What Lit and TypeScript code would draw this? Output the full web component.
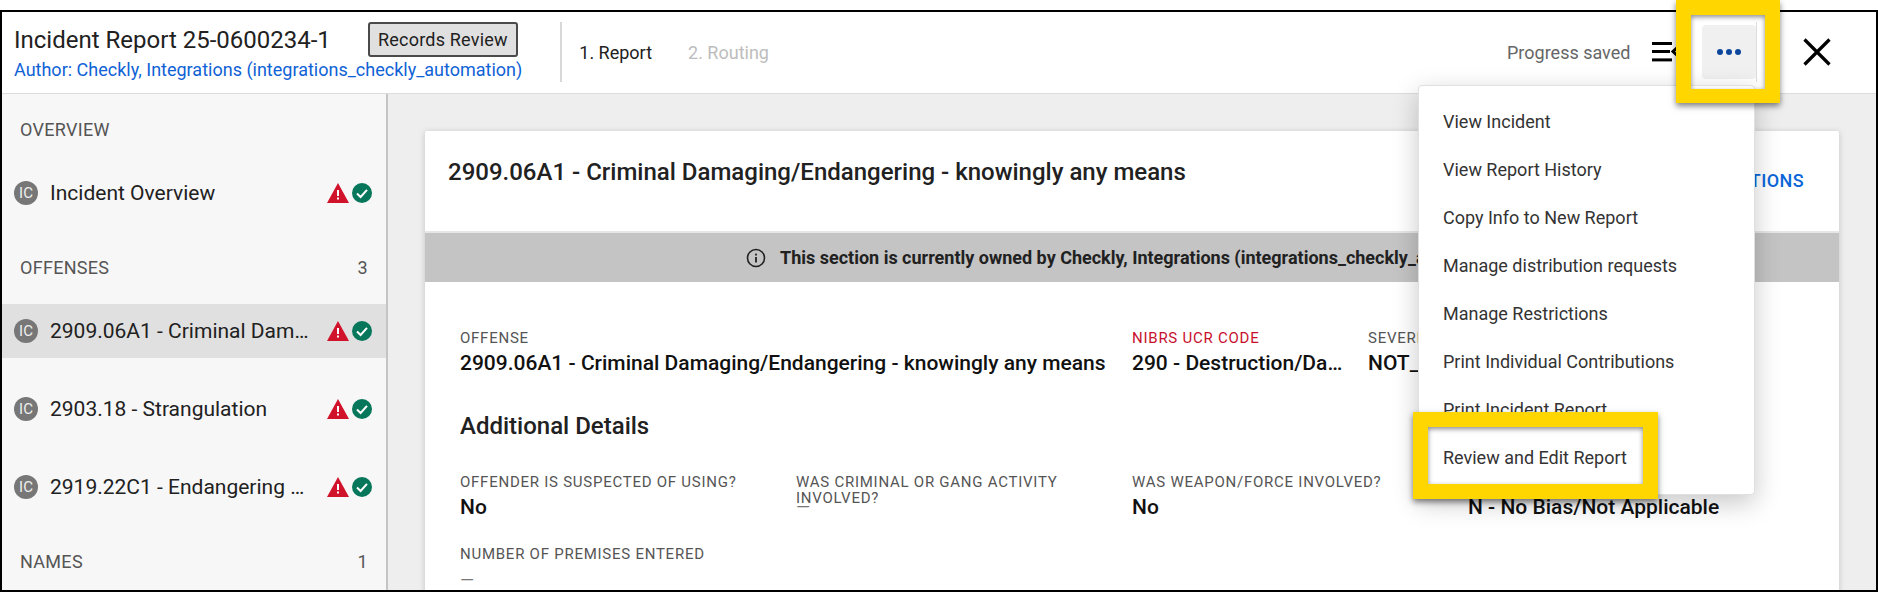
import { LitElement, html, css } from "lit";
import { customElement } from "lit/decorators.js";

const warn = html`<svg class="warn" viewBox="0 0 22 20" width="22" height="20"><path d="M11 0 L22 20 H0 Z" fill="#d0132b"/><rect x="10" y="7" width="2" height="6" fill="#fff"/><rect x="10" y="14.5" width="2" height="2" fill="#fff"/></svg>`;
const ok = html`<svg class="ok" viewBox="0 0 20 20" width="20" height="20"><circle cx="10" cy="10" r="10" fill="#07775b"/><path d="M5 10.5 L8.6 14 L15 6.8" fill="none" stroke="#fff" stroke-width="2"/></svg>`;

@customElement("app-root")
export class AppRoot extends LitElement {
  static styles = css`
    :host { display: block; position: relative; width: 1878px; height: 592px; background: #fff; overflow: hidden; font-family: Roboto, "Liberation Sans", sans-serif; color: #212121; }
    .frame { position: absolute; inset: 10px 0 0 0; border: 2px solid #000; display: flex; flex-direction: column; overflow: hidden; background: #fff; }
    header { flex: none; height: 82px; box-sizing: border-box; border-bottom: 1px solid #ddd; display: flex; align-items: flex-start; padding-left: 12px; }
    .tcol { padding-top: 10px; }
    .trow { display: flex; align-items: center; height: 35px; }
    .title { font-size: 24px; color: #212121; }
    .rr { margin-left: 37px; box-sizing: border-box; width: 150px; height: 35px; background: #e0e0e0; border: 2px solid #4a4a4a; border-radius: 3px; font: 18px Roboto, sans-serif; letter-spacing: .2px; color: #212121; padding: 0; }
    .author { font-size: 18px; line-height: 24px; margin-top: 1px; color: #0f62d6; }
    .divider { margin: 10px 17px 0 38px; width: 2px; height: 60px; background: #d8d8d8; flex: none; }
    .steps { display: flex; gap: 36px; font-size: 18px; height: 80px; align-items: center; color: #212121; }
    .steps .off { color: #bdbdbd; }
    .right { margin-left: auto; display: flex; align-items: center; height: 80px; }
    .saved { font-size: 18px; color: #666; width: 145px; }
    .list { width: 50px; height: 20px; display: block; }
    .more { width: 54px; height: 54px; background: #f0f0f0; border-radius: 4px; display: flex; align-items: center; justify-content: center; gap: 3px; }
    .more i { width: 6px; height: 6px; border-radius: 50%; background: #0c479d; display: block; }
    .vsep { width: 1px; height: 60px; background: #ddd; }
    .x { display: block; margin: 0 45px 0 46px; }
    .body { flex: 1; display: flex; min-height: 0; }
    aside { flex: none; width: 386px; box-sizing: border-box; background: #f7f7f7; border-right: 2px solid #c4c4c4; }
    .sec { display: flex; justify-content: space-between; padding: 0 18px; font-size: 18px; line-height: 22px; color: #555; letter-spacing: .3px; }
    .row { height: 54px; display: flex; align-items: center; padding: 0 14px 0 12px; font-size: 21px; color: #212121; }
    .row.sel { background: #e0e0e0; }
    .ic { flex: none; width: 24px; height: 24px; border-radius: 50%; background: #777; color: #eee; font-size: 15px; display: flex; align-items: center; justify-content: center; margin-right: 12px; }
    .nm { width: 262px; white-space: nowrap; overflow: hidden; text-overflow: ellipsis; }
    .warn { margin: 0 3px 0 15px; flex: none; }
    .ok { flex: none; }
    main { flex: 1; background: #eee; padding: 37px 37px 0; min-width: 0; }
    .card { background: #fff; box-shadow: 0 1px 6px rgba(0,0,0,.18); border-radius: 2px 2px 0 0; height: 600px; }
    .chead { height: 102px; box-sizing: border-box; padding: 25px 23px 0; display: flex; justify-content: space-between; border-bottom: 2px solid #e6e6e6; }
    .chead h2 { margin: 0; font-size: 24px; line-height: 32px; font-weight: 500; color: #212121; }
    .act { font-size: 18px; font-weight: 500; color: #0a66d8; padding: 14px 12px 0 0; letter-spacing: .4px; }
    .banner { height: 49px; background: #c4c4c4; display: flex; align-items: center; padding-left: 321px; font-size: 18px; font-weight: 700; white-space: nowrap; gap: 14px; overflow: hidden; }
    .cbody { padding: 48px 0 0 35px; }
    .f-row { display: flex; }
    .f { box-sizing: border-box; width: 336px; }
    .f.w2 { width: 672px; }
    .f.n { width: 236px; padding-right: 20px; }
    .lb { font-size: 15px; line-height: 16px; color: #555; letter-spacing: .75px; text-transform: uppercase; }
    .lb.red { color: #c8102e; }
    .v { font-size: 21px; line-height: 24px; font-weight: 500; color: #111; margin-top: 5px; white-space: nowrap; overflow: hidden; text-overflow: ellipsis; }
    .f.g .lb { padding-right: 60px; }
    .dash { font-size: 18px; line-height: 24px; color: #777; margin-top: 6px; }
    .f.g .dash { margin-top: -11px; }
    h3 { margin: 35px 0 0; font-size: 24px; line-height: 32px; font-weight: 500; color: #212121; }
    .grid { display: flex; margin-top: 32px; height: 72px; }
    .menu { position: absolute; left: 1418px; top: 85px; width: 337px; height: 410px; box-sizing: border-box; background: #fff; border: 1px solid #e0e0e0; border-radius: 4px; box-shadow: 0 8px 26px rgba(0,0,0,.22); padding-top: 12px; font-size: 18px; color: #333; }
    .menu div { height: 48px; line-height: 48px; padding-left: 24px; }
    .hl { position: absolute; box-sizing: border-box; border: 15px solid #ffd600; box-shadow: 0 3px 6px rgba(0,0,0,.5), inset 0 2px 5px rgba(0,0,0,.45); }
    .hl.one { left: 1676px; top: 0; width: 104px; height: 103px; border-bottom-width: 14px; }
    .hl.two { left: 1413px; top: 412px; width: 245px; height: 87px; }
  `;

  render() {
    const rows = [
      ["Incident Overview", false, 0],
      ["2909.06A1 - Criminal Damaging/Endangering - knowingly any means", true, 0],
      ["2903.18 - Strangulation", false, 24],
      ["2919.22C1 - Endangering Children - Abuse of a minor", false, 24],
    ];
    const row = (r: any) => html`<div class="row ${r[1] ? "sel" : ""}" style="margin-top:${r[2]}px"><span class="ic">IC</span><span class="nm">${r[0]}</span>${warn}${ok}</div>`;
    return html`
      <div class="frame">
        <header>
          <div class="tcol">
            <div class="trow"><span class="title">Incident Report 25-0600234-1</span><button class="rr">Records Review</button></div>
            <div class="author">Author: Checkly, Integrations (integrations_checkly_automation)</div>
          </div>
          <div class="divider"></div>
          <div class="steps"><span>1. Report</span><span class="off">2. Routing</span></div>
          <div class="right">
            <span class="saved">Progress saved</span>
            <svg class="list" viewBox="0 0 50 20"><rect x="0" y="0" width="20" height="3" fill="#000"/><rect x="0" y="8" width="18" height="3" fill="#000"/><rect x="0" y="16.4" width="20" height="3" fill="#000"/><path d="M28 3 L21 9.5 L28 16" fill="none" stroke="#000" stroke-width="3"/></svg>
            <div class="more"><i></i><i></i><i></i></div>
            <div class="vsep"></div>
            <svg class="x" width="28" height="28" viewBox="0 0 28 28"><path d="M1.5 1.5 L26.5 26.5 M26.5 1.5 L1.5 26.5" stroke="#000" stroke-width="3.2" fill="none"/></svg>
          </div>
        </header>
        <div class="body">
          <aside>
            <div class="sec" style="margin-top:25px;margin-bottom:25px"><span>OVERVIEW</span></div>
            ${row(rows[0])}
            <div class="sec" style="margin-top:37px;margin-bottom:25px"><span>OFFENSES</span><span>3</span></div>
            ${row(rows[1])}
            ${row(rows[2])}
            ${row(rows[3])}
            <div class="sec" style="margin-top:37px"><span>NAMES</span><span>1</span></div>
          </aside>
          <main>
            <div class="card">
              <div class="chead"><h2>2909.06A1 - Criminal Damaging/Endangering - knowingly any means</h2><span class="act">ACTIONS</span></div>
              <div class="banner">
                <svg width="20" height="20" viewBox="0 0 20 20"><circle cx="10" cy="10" r="8.5" fill="none" stroke="#212121" stroke-width="1.6"/><rect x="9.1" y="9" width="1.8" height="5.5" fill="#212121"/><rect x="9.1" y="5.6" width="1.8" height="1.9" fill="#212121"/></svg>
                <span>This section is currently owned by Checkly, Integrations (integrations_checkly_automation)</span>
              </div>
              <div class="cbody">
                <div class="f-row">
                  <div class="f w2"><div class="lb">Offense</div><div class="v">2909.06A1 - Criminal Damaging/Endangering - knowingly any means</div></div>
                  <div class="f n"><div class="lb red">NIBRS UCR Code</div><div class="v">290 - Destruction/Damage/Vandalism of Property</div></div>
                  <div class="f"><div class="lb">Severity</div><div class="v">NOT_APPLICABLE</div></div>
                </div>
                <h3>Additional Details</h3>
                <div class="grid">
                  <div class="f"><div class="lb">Offender is suspected of using?</div><div class="v">No</div></div>
                  <div class="f g"><div class="lb">Was criminal or gang activity involved?</div><div class="dash">—</div></div>
                  <div class="f"><div class="lb">Was weapon/force involved?</div><div class="v">No</div></div>
                  <div class="f"><div class="lb">Bias motivation</div><div class="v">N - No Bias/Not Applicable</div></div>
                </div>
                <div class="f"><div class="lb">Number of premises entered</div><div class="dash">—</div></div>
              </div>
            </div>
          </main>
        </div>
      </div>
      <div class="menu">
        <div>View Incident</div><div>View Report History</div><div>Copy Info to New Report</div><div>Manage distribution requests</div><div>Manage Restrictions</div><div>Print Individual Contributions</div><div>Print Incident Report</div><div>Review and Edit Report</div>
      </div>
      <div class="hl one"></div>
      <div class="hl two"></div>
    `;
  }
}
